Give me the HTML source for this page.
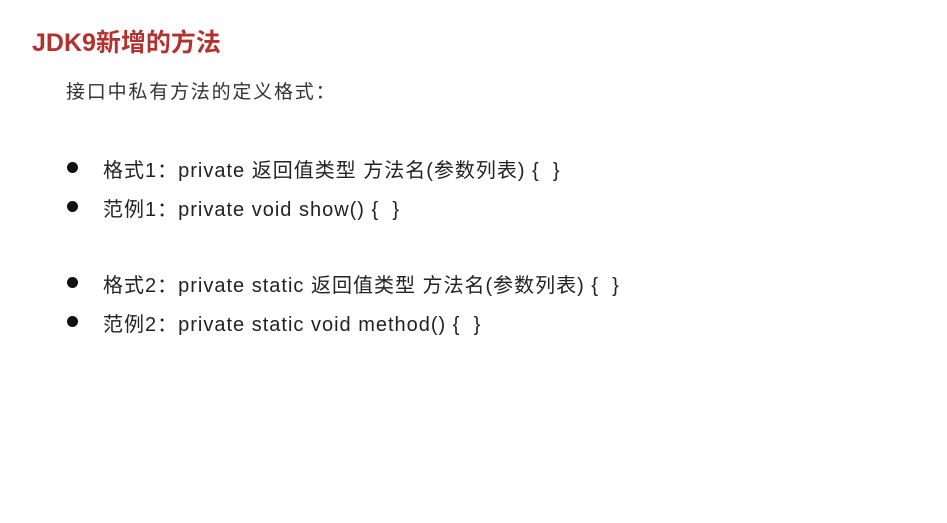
<!DOCTYPE html>
<html><head><meta charset="utf-8"><style>
body{margin:0;width:947px;height:523px;background:#fff;position:relative;overflow:hidden;font-family:"Liberation Sans","Noto Sans CJK SC",sans-serif;}
.t{position:absolute;white-space:nowrap;}
.h{left:32px;top:23px;font-size:25px;font-weight:bold;color:#b3312f;}
.s{left:66px;top:77px;font-size:19px;letter-spacing:1.8px;color:#333;}
.b{left:103px;font-size:20px;letter-spacing:1px;color:#222;}
.d{position:absolute;left:67px;width:11px;height:11px;border-radius:50%;background:#111;}
</style></head><body>
<div class="t h">JDK9新增的方法</div>
<div class="t s">接口中私有方法的定义格式：</div>
<div class="d" style="top:162px"></div>
<div class="t b" style="top:154px">格式1：private 返回值类型 方法名(参数列表) {&nbsp;&nbsp;}</div>
<div class="d" style="top:201px"></div>
<div class="t b" style="top:193px">范例1：private void show() {&nbsp;&nbsp;}</div>
<div class="d" style="top:277px"></div>
<div class="t b" style="top:269px">格式2：private static 返回值类型 方法名(参数列表) {&nbsp;&nbsp;}</div>
<div class="d" style="top:316px"></div>
<div class="t b" style="top:308px">范例2：private static void method() {&nbsp;&nbsp;}</div>
</body></html>
